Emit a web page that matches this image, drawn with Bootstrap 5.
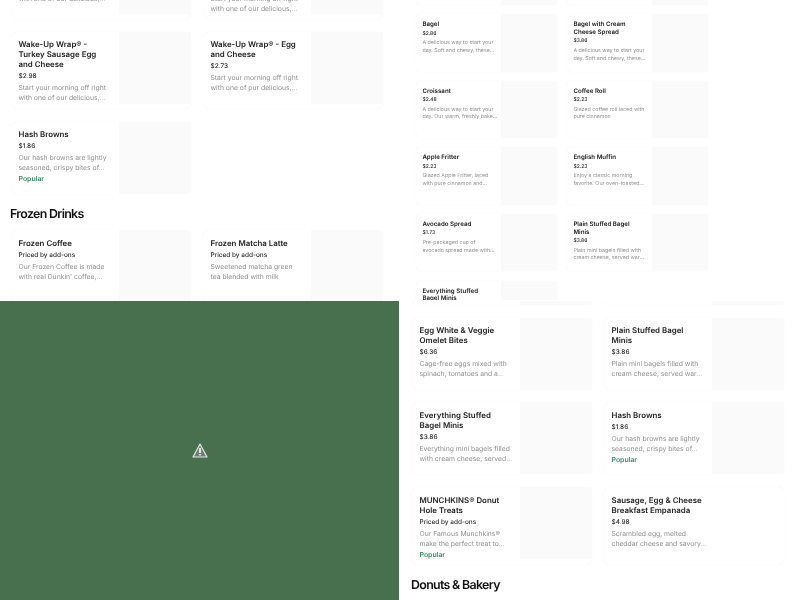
<!DOCTYPE html>
<html lang="en">
<head>
  <meta charset="UTF-8" />
  <meta name="viewport" content="width=device-width, initial-scale=1.0"/>
  <title>Menu</title>
  <link href="https://cdn.jsdelivr.net/npm/bootstrap@5.3.3/dist/css/bootstrap.min.css" rel="stylesheet">
  <style>
    html, body { height: 100%; overflow: hidden; background: #fff; }
    body { font-family: Inter, "Liberation Sans", sans-serif; text-rendering: geometricPrecision; }
    .screen-grid { display: grid; grid-template-columns: 399px 401px; grid-template-rows: 301px 299px; width: 800px; height: 600px; }
    .pane { --u: 1px; }
    .pane-inner { filter: blur(.3px); }
    .pane-tl { padding: 0 0 0 10.5px; }
    .pane-tl .pane-inner { margin-top: -58px; }
    .pane-tl .item-body { padding-left: 8px; }
    .pane-tr { --u: .78px; padding: 0 0 0 17px; height: 300px; }
    .pane-tr .pane-inner { margin-top: -52.3px; }
    .pane-tr .menu-grid { grid-template-columns: repeat(2, 141px); column-gap: 10px; row-gap: 9.2px; }
    .pane-tr .item-pic { width: 56.5px; height: 57.4px; }
    .pane-tr .item-body { padding: 7px 3px 4px 6.4px; }
    .pane-br { padding: 0 0 0 13px; }
    .pane-br .pane-inner { margin-top: -68px; }
    .pane-br .menu-grid { row-gap: 12.7px; }
    .pane-green { background: #48704e; }
    .menu-grid { display: grid; grid-template-columns: repeat(2, 180px); column-gap: 12px; row-gap: 12.3px; }
    .item-card { border: 0; border-radius: calc(var(--u) * 6); box-shadow: 0 0 1px #e9e9e9; background: #fff; }
    .item-body { padding: calc(var(--u) * 7.6) calc(var(--u) * 6) calc(var(--u) * 5.9) calc(var(--u) * 7.5); min-width: 0; gap: calc(var(--u) * 2); }
    .item-pic { width: calc(var(--u) * 72); height: calc(var(--u) * 72); background: #fafafa; }
    .item-pic-none { width: 60px; background: transparent; }
    .item-title { font-size: calc(var(--u) * 7.9); line-height: calc(var(--u) * 10); font-weight: 600; color: #222; }
    .item-price { font-size: calc(var(--u) * 6.45); line-height: calc(var(--u) * 10); font-weight: 500; color: #2a2a2a; }
    .item-desc { font-size: calc(var(--u) * 6.8); line-height: calc(var(--u) * 10); color: #8f8f8f; }
    .item-tag { font-size: calc(var(--u) * 6.9); line-height: calc(var(--u) * 8); font-weight: 600; color: #3c8a69; }
    .section-title { font-size: 12.4px; line-height: 16px; font-weight: 600; letter-spacing: -.055em; color: #111; margin: 12px 0 8.5px -.5px; }
    .pane-br .section-title { margin: 12px 0 0 -1px; }
  </style>
</head>
<body>
  <div class="screen-grid">

    <div class="pane pane-tl overflow-hidden">
      <div class="pane-inner">
        <div class="menu-grid">
          <div class="card flex-row align-items-start item-card">
            <div class="item-body d-flex flex-column flex-grow-1">
              <div class="item-title">Wake-Up Wrap® - Bacon and Cheese</div>
              <div class="item-price">$2.98</div>
              <div class="item-desc">Start your morning off right with one of our delicious,…</div>
            </div>
            <div class="item-pic flex-shrink-0"></div>
          </div>
          <div class="card flex-row align-items-start item-card">
            <div class="item-body d-flex flex-column flex-grow-1">
              <div class="item-title">Wake-Up Wrap® - Sausage Egg and Cheese with Hash</div>
              <div class="item-price">$2.98</div>
              <div class="item-desc">Start your morning off right with one of our delicious,…</div>
            </div>
            <div class="item-pic flex-shrink-0"></div>
          </div>
          <div class="card flex-row align-items-start item-card">
            <div class="item-body d-flex flex-column flex-grow-1">
              <div class="item-title">Wake-Up Wrap® - Turkey Sausage Egg and Cheese</div>
              <div class="item-price">$2.98</div>
              <div class="item-desc">Start your morning off right with one of our delicious,…</div>
            </div>
            <div class="item-pic flex-shrink-0"></div>
          </div>
          <div class="card flex-row align-items-start item-card">
            <div class="item-body d-flex flex-column flex-grow-1">
              <div class="item-title">Wake-Up Wrap® - Egg and Cheese</div>
              <div class="item-price">$2.73</div>
              <div class="item-desc">Start your morning off right with one of pur delicious,…</div>
            </div>
            <div class="item-pic flex-shrink-0"></div>
          </div>
          <div class="card flex-row align-items-start item-card">
            <div class="item-body d-flex flex-column flex-grow-1">
              <div class="item-title">Hash Browns</div>
              <div class="item-price">$1.86</div>
              <div class="item-desc">Our hash browns are lightly seasoned, crispy bites of…</div>
              <div class="item-tag">Popular</div>
            </div>
            <div class="item-pic flex-shrink-0"></div>
          </div>
        </div>
        <div class="section-title">Frozen Drinks</div>
        <div class="menu-grid">
          <div class="card flex-row align-items-start item-card">
            <div class="item-body d-flex flex-column flex-grow-1">
              <div class="item-title">Frozen Coffee</div>
              <div class="item-price">Priced by add-ons</div>
              <div class="item-desc">Our Frozen Coffee is made with real Dunkin' coffee,…</div>
            </div>
            <div class="item-pic flex-shrink-0"></div>
          </div>
          <div class="card flex-row align-items-start item-card">
            <div class="item-body d-flex flex-column flex-grow-1">
              <div class="item-title">Frozen Matcha Latte</div>
              <div class="item-price">Priced by add-ons</div>
              <div class="item-desc">Sweetened matcha green<br>tea blended with milk</div>
            </div>
            <div class="item-pic flex-shrink-0"></div>
          </div>
        </div>
      </div>
    </div>

    <div class="pane pane-tr overflow-hidden">
      <div class="pane-inner">
        <div class="menu-grid">
          <div class="card flex-row align-items-start item-card">
            <div class="item-body flex-grow-1"></div>
            <div class="item-pic flex-shrink-0"></div>
          </div>
          <div class="card flex-row align-items-start item-card">
            <div class="item-body flex-grow-1"></div>
            <div class="item-pic flex-shrink-0"></div>
          </div>
          <div class="card flex-row align-items-start item-card">
            <div class="item-body d-flex flex-column flex-grow-1">
              <div class="item-title">Bagel</div>
              <div class="item-price">$2.86</div>
              <div class="item-desc">A delicious way to start your day. Soft and chewy, these…</div>
            </div>
            <div class="item-pic flex-shrink-0"></div>
          </div>
          <div class="card flex-row align-items-start item-card">
            <div class="item-body d-flex flex-column flex-grow-1">
              <div class="item-title">Bagel with Cream Cheese Spread</div>
              <div class="item-price">$3.86</div>
              <div class="item-desc">A delicious way to start your day. Soft and chewy, these…</div>
            </div>
            <div class="item-pic flex-shrink-0"></div>
          </div>
          <div class="card flex-row align-items-start item-card">
            <div class="item-body d-flex flex-column flex-grow-1">
              <div class="item-title">Croissant</div>
              <div class="item-price">$2.48</div>
              <div class="item-desc">A delicious way to start your day. Our warm, freshly bake…</div>
            </div>
            <div class="item-pic flex-shrink-0"></div>
          </div>
          <div class="card flex-row align-items-start item-card">
            <div class="item-body d-flex flex-column flex-grow-1">
              <div class="item-title">Coffee Roll</div>
              <div class="item-price">$2.23</div>
              <div class="item-desc">Glazed coffee roll laced with pure cinnamon</div>
            </div>
            <div class="item-pic flex-shrink-0"></div>
          </div>
          <div class="card flex-row align-items-start item-card">
            <div class="item-body d-flex flex-column flex-grow-1">
              <div class="item-title">Apple Fritter</div>
              <div class="item-price">$2.23</div>
              <div class="item-desc">Glazed Apple Fritter, laced<br>with pure cinnamon and…</div>
            </div>
            <div class="item-pic flex-shrink-0"></div>
          </div>
          <div class="card flex-row align-items-start item-card">
            <div class="item-body d-flex flex-column flex-grow-1">
              <div class="item-title">English Muffin</div>
              <div class="item-price">$2.23</div>
              <div class="item-desc">Enjoy a classic morning<br>favorite. Our oven-toasted…</div>
            </div>
            <div class="item-pic flex-shrink-0"></div>
          </div>
          <div class="card flex-row align-items-start item-card">
            <div class="item-body d-flex flex-column flex-grow-1">
              <div class="item-title">Avocado Spread</div>
              <div class="item-price">$1.73</div>
              <div class="item-desc">Pre-packaged cup of<br>avocado spread made with…</div>
            </div>
            <div class="item-pic flex-shrink-0"></div>
          </div>
          <div class="card flex-row align-items-start item-card">
            <div class="item-body d-flex flex-column flex-grow-1">
              <div class="item-title">Plain Stuffed Bagel<br>Minis</div>
              <div class="item-price">$3.86</div>
              <div class="item-desc">Plain mini bagels filled with cream cheese, served war…</div>
            </div>
            <div class="item-pic flex-shrink-0"></div>
          </div>
          <div class="card flex-row align-items-start item-card">
            <div class="item-body d-flex flex-column flex-grow-1">
              <div class="item-title">Everything Stuffed<br>Bagel Minis</div>
              <div class="item-price">$3.86</div>
              <div class="item-desc">Everything mini bagels filled with cream cheese, served…</div>
            </div>
            <div class="item-pic flex-shrink-0"></div>
          </div>
        </div>
      </div>
    </div>

    <div class="pane pane-green d-flex align-items-center justify-content-center">
      <svg width="16" height="15" viewBox="0 0 16 15" aria-hidden="true">
        <path d="M8 1 L15 14 H1 Z" fill="#6d7f70" stroke="#e4e8e4" stroke-width="1.2" stroke-linejoin="round"/>
        <path d="M8 5 V10" stroke="#f2f2f2" stroke-width="1.8"/>
        <path d="M8 11 V12.6" stroke="#f2f2f2" stroke-width="1.6"/>
      </svg>
    </div>

    <div class="pane pane-br overflow-hidden">
      <div class="pane-inner">
        <div class="menu-grid">
          <div class="card flex-row align-items-start item-card">
            <div class="item-body flex-grow-1"></div>
            <div class="item-pic flex-shrink-0"></div>
          </div>
          <div class="card flex-row align-items-start item-card">
            <div class="item-body flex-grow-1"></div>
            <div class="item-pic flex-shrink-0"></div>
          </div>
          <div class="card flex-row align-items-start item-card">
            <div class="item-body d-flex flex-column flex-grow-1">
              <div class="item-title">Egg White &amp; Veggie Omelet Bites</div>
              <div class="item-price">$6.36</div>
              <div class="item-desc">Cage-free eggs mixed with spinach, tomatoes and a…</div>
            </div>
            <div class="item-pic flex-shrink-0"></div>
          </div>
          <div class="card flex-row align-items-start item-card">
            <div class="item-body d-flex flex-column flex-grow-1">
              <div class="item-title">Plain Stuffed Bagel<br>Minis</div>
              <div class="item-price">$3.86</div>
              <div class="item-desc">Plain mini bagels filled with cream cheese, served war…</div>
            </div>
            <div class="item-pic flex-shrink-0"></div>
          </div>
          <div class="card flex-row align-items-start item-card">
            <div class="item-body d-flex flex-column flex-grow-1">
              <div class="item-title">Everything Stuffed Bagel Minis</div>
              <div class="item-price">$3.86</div>
              <div class="item-desc">Everything mini bagels filled with cream cheese, served…</div>
            </div>
            <div class="item-pic flex-shrink-0"></div>
          </div>
          <div class="card flex-row align-items-start item-card">
            <div class="item-body d-flex flex-column flex-grow-1">
              <div class="item-title">Hash Browns</div>
              <div class="item-price">$1.86</div>
              <div class="item-desc">Our hash browns are lightly seasoned, crispy bites of…</div>
              <div class="item-tag">Popular</div>
            </div>
            <div class="item-pic flex-shrink-0"></div>
          </div>
          <div class="card flex-row align-items-start item-card">
            <div class="item-body d-flex flex-column flex-grow-1">
              <div class="item-title">MUNCHKINS® Donut Hole Treats</div>
              <div class="item-price">Priced by add-ons</div>
              <div class="item-desc">Our Famous Munchkins® make the perfect treat to…</div>
              <div class="item-tag">Popular</div>
            </div>
            <div class="item-pic flex-shrink-0"></div>
          </div>
          <div class="card flex-row align-items-start item-card">
            <div class="item-body d-flex flex-column flex-grow-1">
              <div class="item-title">Sausage, Egg &amp; Cheese<br>Breakfast Empanada</div>
              <div class="item-price">$4.98</div>
              <div class="item-desc">Scrambled egg, melted<br>cheddar cheese and savory…</div>
            </div>
            <div class="item-pic item-pic-none flex-shrink-0"></div>
          </div>
        </div>
        <div class="section-title">Donuts &amp; Bakery</div>
      </div>
    </div>

  </div>
  <script src="https://cdn.jsdelivr.net/npm/bootstrap@5.3.3/dist/js/bootstrap.bundle.min.js"></script>
</body>
</html>
